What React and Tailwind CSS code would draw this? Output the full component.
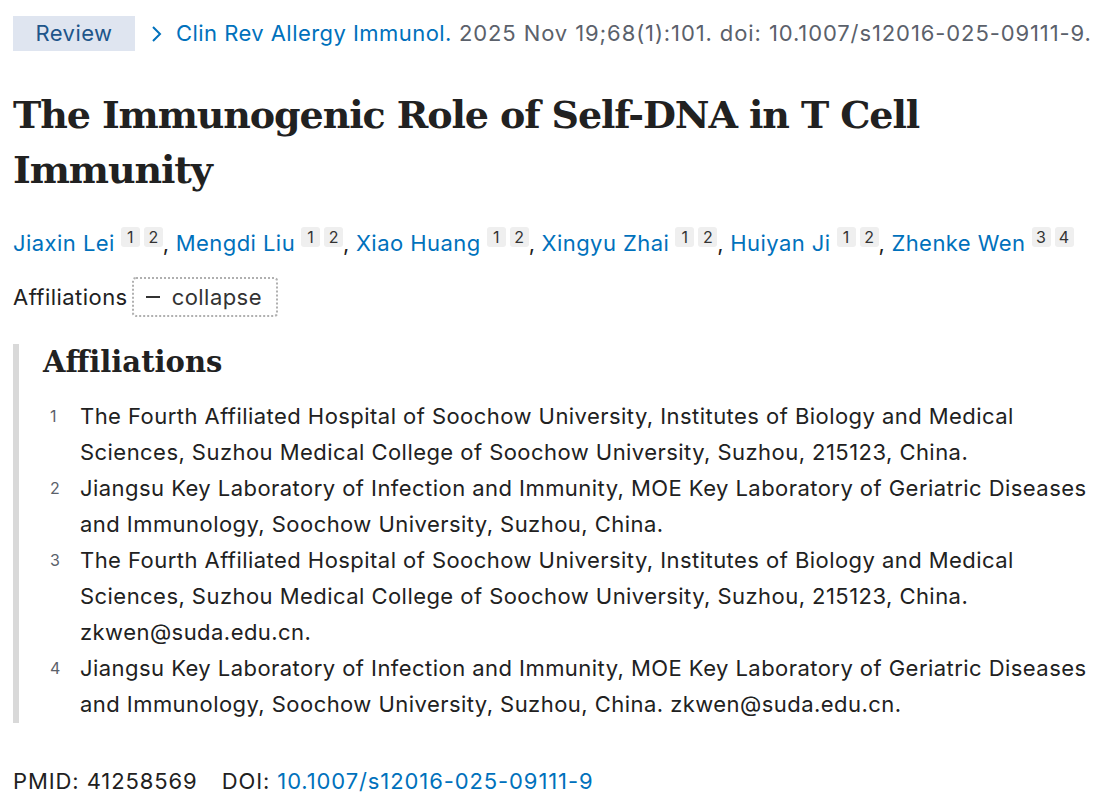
import React from "react";

const authors = [
  { name: "Jiaxin Lei", refs: ["1", "2"] },
  { name: "Mengdi Liu", refs: ["1", "2"] },
  { name: "Xiao Huang", refs: ["1", "2"] },
  { name: "Xingyu Zhai", refs: ["1", "2"] },
  { name: "Huiyan Ji", refs: ["1", "2"] },
  { name: "Zhenke Wen", refs: ["3", "4"] },
];

const affiliations = [
  [
    "The Fourth Affiliated Hospital of Soochow University, Institutes of Biology and Medical",
    "Sciences, Suzhou Medical College of Soochow University, Suzhou, 215123, China.",
  ],
  [
    "Jiangsu Key Laboratory of Infection and Immunity, MOE Key Laboratory of Geriatric Diseases",
    "and Immunology, Soochow University, Suzhou, China.",
  ],
  [
    "The Fourth Affiliated Hospital of Soochow University, Institutes of Biology and Medical",
    "Sciences, Suzhou Medical College of Soochow University, Suzhou, 215123, China.",
    "zkwen@suda.edu.cn.",
  ],
  [
    "Jiangsu Key Laboratory of Infection and Immunity, MOE Key Laboratory of Geriatric Diseases",
    "and Immunology, Soochow University, Suzhou, China. zkwen@suda.edu.cn.",
  ],
];

const sans = "font-['Inter','Liberation_Sans',Arial,sans-serif]";
const serif = "font-['DejaVu_Serif','Liberation_Serif',serif]";

export default function App() {
  return (
    <div className={`${sans} bg-white text-[#212121] w-[1102px] h-[803px] overflow-hidden pl-[13px] pt-[16px] tracking-[0.45px]`}>
      {/* citation row */}
      <div className="flex items-center h-[35px] text-[22px] whitespace-nowrap">
        <span className="bg-[#dfe5f0] text-[#20558a] h-[35px] w-[122px] flex items-center justify-center">Review</span>
        <span className="ml-[16px] text-[#0071bc] flex items-center">
          <svg width="12" height="18" viewBox="0 0 12 18" className="mr-[13px]">
            <path d="M2 2 L9 9 L2 16" fill="none" stroke="#0071bc" strokeWidth="2" />
          </svg>
          Clin Rev Allergy Immunol.
        </span>
        <span className="ml-[7px] text-[#5b616b] tracking-[0.9px]">2025 Nov 19;68(1):101. doi: 10.1007/s12016-025-09111-9.</span>
      </div>

      {/* title */}
      <h1 className={`${serif} font-bold text-[38px] leading-[55px] text-[#212121] mt-[36px] tracking-[-1.1px]`}>
        The Immunogenic Role of Self-DNA in T Cell
        <br />
        Immunity
      </h1>

      {/* authors */}
      <div className="mt-[31px] text-[22px] leading-[30px] whitespace-nowrap flex items-center">
        {authors.map((a, i) => (
          <span key={a.name} className="flex items-center">
            <span className="text-[#0071bc]">{a.name}</span>
            <span className="ml-[6px] -mt-[12px] flex gap-[4px]">
              {a.refs.map((r) => (
                <span
                  key={r}
                  className="bg-[#efefef] text-[#333] text-[16px] leading-[20px] w-[19px] text-center rounded-[3px] tracking-normal"
                >
                  {r}
                </span>
              ))}
            </span>
            {i < authors.length - 1 && <span className="mr-[6px]">,</span>}
          </span>
        ))}
      </div>

      {/* affiliations toggle */}
      <div className="mt-[19px] flex items-center text-[22px]">
        <span>Affiliations</span>
        <span className="ml-[4px] h-[40px] pl-[12px] pr-[14px] border-2 border-dotted border-[#b0b0b0] rounded-[4px] flex items-center text-[#333]">
          <span className="inline-block w-[14px] h-[2.5px] bg-[#333] mr-[12px]" />
          collapse
        </span>
      </div>

      {/* affiliation list */}
      <div className="mt-[27px] border-l-[6px] border-[#d9d9d9] pl-[24px] pb-[1px]">
        <h2 className={`${serif} font-bold text-[29px] leading-[36px] tracking-[0px]`}>Affiliations</h2>
        <ol className="mt-[18px]">
          {affiliations.map((lines, i) => (
            <li key={i} className="flex">
              <span className="w-[37px] shrink-0 text-[16px] text-[#5b616b] leading-[36px] pl-[7px]">{i + 1}</span>
              <div className="text-[22px] leading-[36px] whitespace-nowrap">
                {lines.map((l, j) => (
                  <div key={j}>{l}</div>
                ))}
              </div>
            </li>
          ))}
        </ol>
      </div>

      {/* ids */}
      <div className="mt-[42px] text-[22px] whitespace-nowrap tracking-[0.9px]">
        PMID: 41258569<span className="ml-[24px]">DOI: </span>
        <span className="text-[#0071bc]">10.1007/s12016-025-09111-9</span>
      </div>
    </div>
  );
}
